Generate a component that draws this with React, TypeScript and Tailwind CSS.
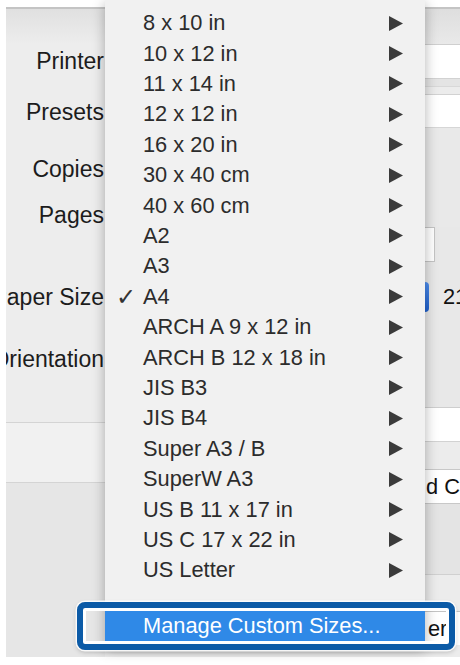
import React from "react";

const sizes = [
  "8 x 10 in",
  "10 x 12 in",
  "11 x 14 in",
  "12 x 12 in",
  "16 x 20 in",
  "30 x 40 cm",
  "40 x 60 cm",
  "A2",
  "A3",
  "A4",
  "ARCH A 9 x 12 in",
  "ARCH B 12 x 18 in",
  "JIS B3",
  "JIS B4",
  "Super A3 / B",
  "SuperW A3",
  "US B 11 x 17 in",
  "US C 17 x 22 in",
  "US Letter",
];

function Arrow() {
  return (
    <svg width="14" height="15" viewBox="0 0 14 15" className="mr-[22px] shrink-0">
      <polygon points="0,0 14,7.5 0,15" fill="#3b3b3b" />
    </svg>
  );
}

function Label({ h, text }: { h: string; text: string }) {
  return (
    <div className={`flex shrink-0 items-center justify-end whitespace-nowrap pr-[1px] ${h}`}>
      {text}
    </div>
  );
}

export default function App() {
  return (
    <div className="relative h-[665px] w-[460px] overflow-hidden bg-white font-['Liberation_Sans',Arial,sans-serif] text-[21.8px] leading-none text-[#1c1c1c]">
      {/* print dialog behind the menu */}
      <div className="ml-[6px] mt-[7px] flex h-[650px] border-t-2 border-[#c4c4c4]">
        <div className="flex w-[99px] shrink-0 flex-col overflow-hidden bg-[#ededed] text-[23px]">
          <div className="h-[35px] shrink-0 bg-gradient-to-b from-[#e0e0e0] to-[#ededed]" />
          <Label h="h-[34px]" text="Printer" />
          <div className="h-[17px] shrink-0" />
          <Label h="h-[34px]" text="Presets" />
          <div className="h-[23px] shrink-0" />
          <Label h="h-[34px]" text="Copies" />
          <div className="h-[12px] shrink-0" />
          <Label h="h-[34px]" text="Pages" />
          <div className="h-[48px] shrink-0" />
          <Label h="h-[34px]" text="Paper Size" />
          <div className="h-[28px] shrink-0" />
          <Label h="h-[34px]" text="Orientation" />
          <div className="h-[46px] shrink-0" />
          <div className="h-[60px] shrink-0 border-t border-[#d4d4d4] bg-[#f1f1f1]" />
          <div className="flex-1 border-t border-[#d4d4d4] bg-[#e6e6e6]" />
        </div>

        <div className="flex-1 bg-[#ececec]" />

        <div className="flex w-[35px] shrink-0 flex-col overflow-hidden bg-[#e8e8e8]">
          <div className="h-[35px] shrink-0 bg-gradient-to-b from-[#dedede] to-[#e9e9e9]" />
          <div className="h-[34px] shrink-0 border-t border-[#cfcfcf] bg-white" />
          <div className="h-[8px] shrink-0 border-t border-[#d2d2d2] bg-[#e4e4e4]" />
          <div className="h-[8px] shrink-0 border-t border-[#d8d8d8] bg-[#ececec]" />
          <div className="h-[33px] shrink-0 border-t border-[#d2d2d2] bg-white" />
          <div className="h-[100px] shrink-0 border-t border-[#d6d6d6] bg-[#e9e9e9]" />
          <div className="h-[35px] shrink-0">
            <div className="h-full w-[10px] border border-l-0 border-[#c4c4c4] bg-white" />
          </div>
          <div className="h-[20px] shrink-0" />
          <div className="flex h-[30px] shrink-0 items-center whitespace-nowrap">
            <div className="h-full w-[4px] shrink-0 rounded-r-[4px] bg-gradient-to-b from-[#4e8ff0] to-[#1d5fcc]" />
            <span className="ml-[14px] text-[#111]">21.0 by 29.7 cm</span>
          </div>
          <div className="h-[95px] shrink-0" />
          <div className="h-[34px] shrink-0 border-t border-[#cecece] bg-white" />
          <div className="h-[28px] shrink-0 border-t border-[#d2d2d2] bg-[#ececec]" />
          <div className="flex h-[35px] shrink-0 items-center whitespace-nowrap border-y border-[#c8c8c8] bg-white">
            <span className="ml-[1px] text-[#111]">d Color</span>
          </div>
          <div className="h-[70px] shrink-0 bg-[#e4e4e4]" />
          <div className="h-[37px] shrink-0 border-t border-[#d0d0d0] bg-[#ececec]" />
          <div className="flex h-[34px] shrink-0 items-center whitespace-nowrap border-t border-[#c4c4c4] bg-white">
            <span className="ml-[3px] text-[#111]">er</span>
          </div>
          <div className="flex-1 bg-[#ececec]" />
        </div>
      </div>

      {/* paper size pop-up menu */}
      <div className="absolute left-[105px] top-0 h-[647px] w-[320px] bg-[#f1f1f1] pt-[8px] text-[#2c2c2c] shadow-[0_3px_12px_rgba(0,0,0,0.3)]">
        {sizes.map((s) => (
          <div key={s} className="flex h-[30.4px] items-center">
            <span className="w-[38px] shrink-0 pl-[11px] font-['DejaVu_Sans',sans-serif] text-[24px] font-bold text-[#333]">
              {s === "A4" ? "✓" : ""}
            </span>
            <span className="flex-1 whitespace-nowrap">{s}</span>
            <Arrow />
          </div>
        ))}
        <div className="h-[25.4px]" />
        <div className="flex h-[30px] items-center bg-[#2f89e7] pl-[38px] text-white">
          Manage Custom Sizes...
        </div>
      </div>

      {/* highlight frame */}
      <div className="absolute left-[77px] top-[602px] h-[48px] w-[378px] rounded-[8px] border-[6px] border-[#0c5ba7] shadow-[inset_0_0_0_3px_#ffffff,0_0_0_1.5px_rgba(255,255,255,0.9),0_2px_5px_rgba(0,0,0,0.25)]" />
    </div>
  );
}
